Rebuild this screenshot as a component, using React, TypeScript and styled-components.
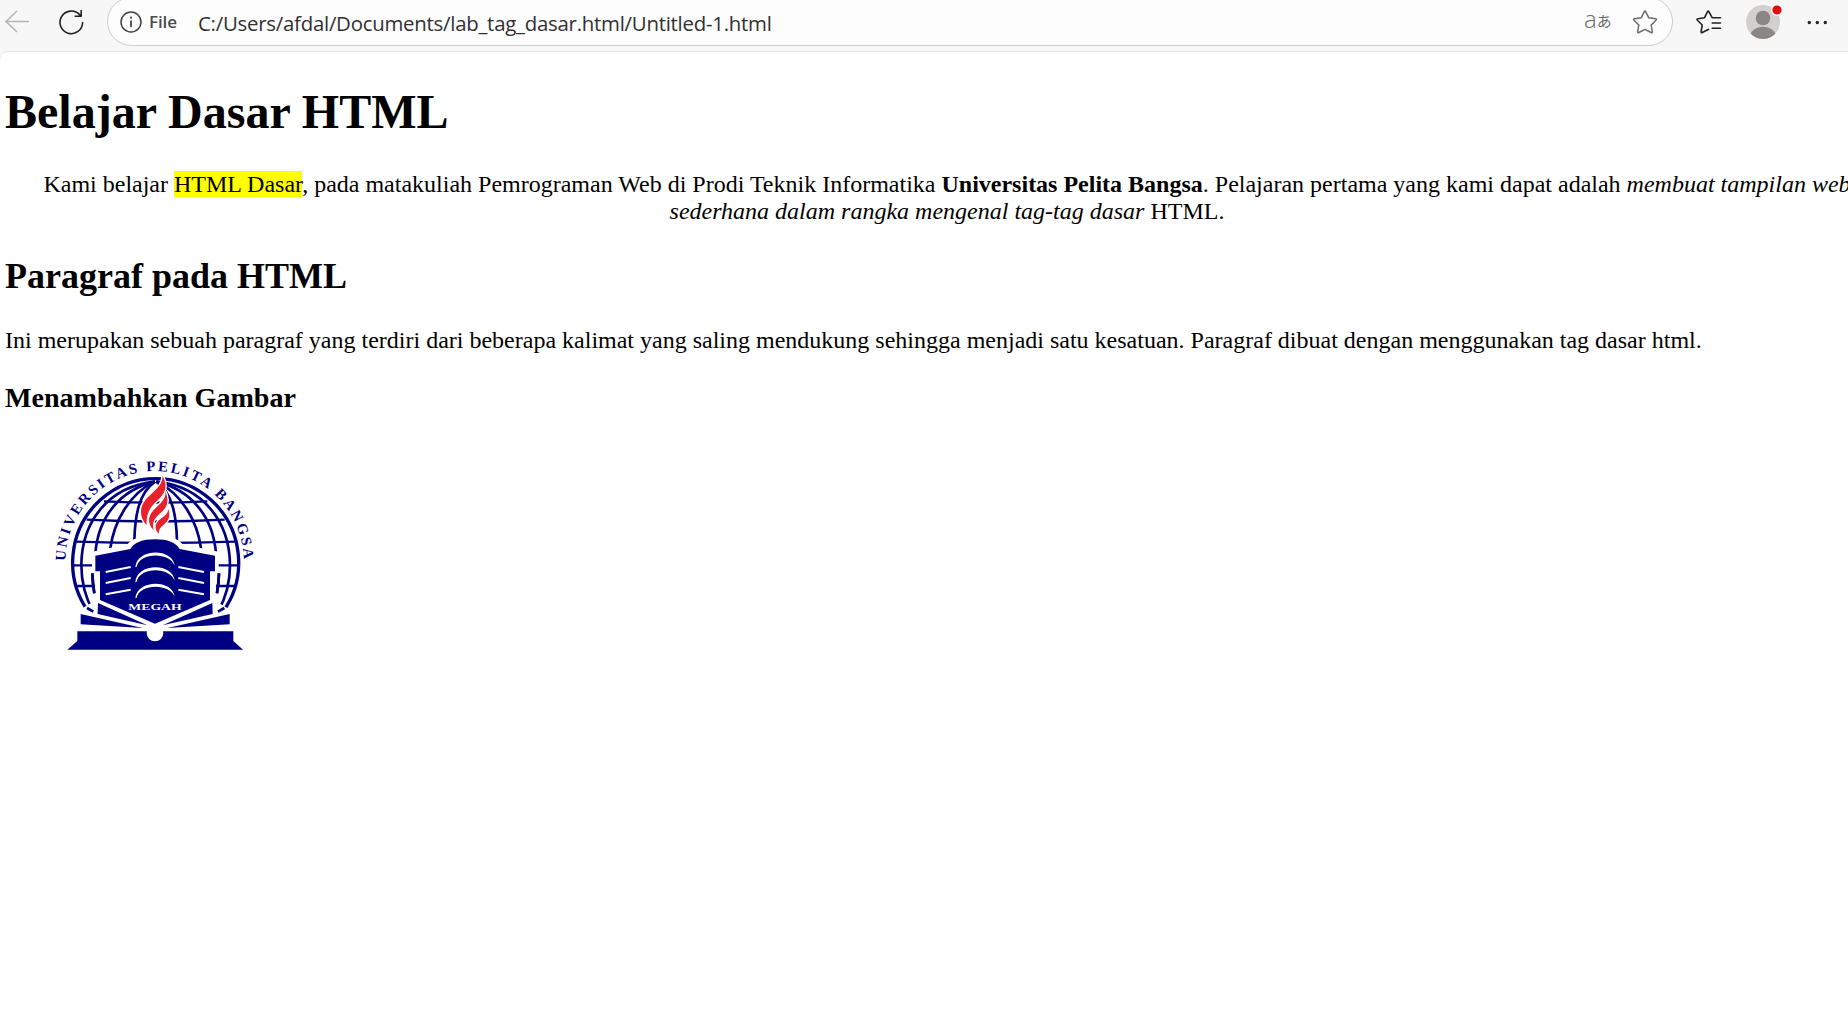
import React from 'react';
import styled, { createGlobalStyle } from 'styled-components';

const GlobalStyle = createGlobalStyle`
  html, body { margin: 0; background: #fff; overflow: hidden; }
`;

const Window = styled.div`
  display: flex;
  flex-direction: column;
  height: 1011px;
  overflow: hidden;
  background: #f7f7f7;
`;

const Toolbar = styled.header`
  display: flex;
  align-items: flex-start;
  height: 51px;
  flex: none;
  font-family: 'Open Sans', 'Noto Sans', sans-serif;
`;

const IconSlot = styled.span<{ $w: number; $gap?: number }>`
  display: flex;
  flex: none;
  align-items: center;
  height: 44px;
  width: ${(p) => p.$w}px;
  margin-left: ${(p) => p.$gap ?? 0}px;
  svg { display: block; overflow: visible; }
`;

const AddressBar = styled.div`
  box-sizing: border-box;
  display: flex;
  align-items: center;
  width: 1566px;
  height: 49px;
  margin: -3px 0 0 23px;
  border: 1.5px solid #cdcdcd;
  border-radius: 25px;
  background: #fdfdfd;
  padding-left: 12px;
  flex: none;
`;

const Scheme = styled.span`
  width: 49px;
  margin-left: 7px;
  font-size: 17px;
  font-weight: 600;
  line-height: 24px;
  color: #4a4a4a;
  letter-spacing: -0.1px;
`;

const Url = styled.span`
  flex: 1;
  padding-top: 2px;
  font-size: 20.4px;
  line-height: 28px;
  color: #303030;
  letter-spacing: -0.25px;
  white-space: nowrap;
`;

const Translate = styled.span`
  display: flex;
  align-items: center;
  width: 48px;
  color: #6b6b6b;
  font-size: 24px;
  line-height: 26px;
  font-weight: 300;
  span { margin-top: -6px; }
  small { margin-top: -1px; font: 400 15px/20px 'Noto Sans CJK JP', sans-serif; }
`;

const Page = styled.main`
  flex: 1;
  box-sizing: border-box;
  border-top: 1px solid #e4e4e4;
  border-top-left-radius: 8px;
  background: #fff;
  padding-left: 5px;
  color: #000;
  font: 24px/27px 'Liberation Serif', 'Times New Roman', serif;
`;

const Article = styled.article`
  width: 1884px;
`;

const Title = styled.h1`
  margin: 33px 0 32px;
  font-size: 48px;
  line-height: 54px;
`;

const Section = styled.h2`
  margin: 31px 0 30px;
  font-size: 36px;
  line-height: 41px;
`;

const Subsection = styled.h3`
  margin: 28px 0 36px;
  font-size: 28.08px;
  line-height: 32px;
`;

const Paragraph = styled.p<{ $center?: boolean }>`
  margin: 24px 0;
  text-align: ${(p) => (p.$center ? 'center' : 'left')};
`;

const Mark = styled.mark`
  background: #ff0;
  color: #000;
`;

const Figure = styled.figure`
  margin: 0 0 0 35px;
  svg { display: block; }
`;

const BackIcon = () => (
  <svg width="26" height="24" viewBox="0 0 26 24" fill="none" stroke="#b4b4b4" strokeWidth="1.5">
    <path d="M25 11.500H2M13 1L2 11.500l11 10.500" />
  </svg>
);

const ReloadIcon = () => (
  <svg width="26" height="26" viewBox="0 0 26 26" fill="none" stroke="#222" strokeWidth="1.6" strokeLinecap="round" strokeLinejoin="round">
    <path d="M24.600 13.500A11.300 11.300 0 1 1 21.800 5.900M23.200 1.500v5.700h-6" />
  </svg>
);

const InfoIcon = () => (
  <svg width="22" height="22" viewBox="0 0 22 22" fill="none" stroke="#444" strokeWidth="1.5">
    <circle cx="11" cy="11" r="10" />
    <path d="M11 9.5V16" strokeWidth="1.8" />
    <circle cx="11" cy="6.7" r="1.1" fill="#444" stroke="none" />
  </svg>
);

const StarIcon = () => (
  <svg width="26" height="24" viewBox="0 0 26 24" fill="none" stroke="#6b6b6b" strokeWidth="1.5" strokeLinejoin="round">
    <path d="M12.2 1.8q.8-1.4 1.6 0l3 6 6.700 1q1.500.3.500 1.500l-4.800 4.700 1.100 6.700q.1 1.400-1.200.8L13 19.400 6.900 22.500q-1.300.6-1.200-.8L6.800 15 2 10.300q-1-1.200.5-1.500l6.700-1z" />
  </svg>
);

const FavoritesIcon = () => (
  <svg width="26" height="24" viewBox="0 0 26 24" fill="none" stroke="#222" strokeWidth="1.6" strokeLinejoin="round" strokeLinecap="round">
    <path d="M16.200 7.700L13 1.800q-.8-1.400-1.600 0l-3 6-6.500 1q-1.500.3-.5 1.500L6.200 15 5.100 21.700q-.1 1.400 1.200.8L12.600 19.300M16.200 7.700H24.500M16.200 13H24.500M16.200 18.300H24.500" />
  </svg>
);

const AvatarIcon = () => (
  <svg width="36" height="36" viewBox="0 0 36 36">
    <defs>
      <clipPath id="avatar"><circle cx="17" cy="18" r="17" /></clipPath>
    </defs>
    <circle cx="17" cy="18" r="17" fill="#d2d0ce" />
    <g clipPath="url(#avatar)" fill="#8b8785">
      <circle cx="17" cy="14" r="7.300" />
      <ellipse cx="17" cy="33" rx="13" ry="10.300" />
    </g>
    <circle cx="31" cy="6" r="6" fill="#f7f7f7" />
    <circle cx="31" cy="6" r="4.600" fill="#e00b0b" />
  </svg>
);

const MoreIcon = () => (
  <svg width="22" height="6" viewBox="0 0 22 6" fill="#222">
    <circle cx="3.300" cy="3.500" r="1.700" /><circle cx="11.300" cy="3.500" r="1.700" /><circle cx="19.300" cy="3.500" r="1.700" />
  </svg>
);

const Meridians = () => (
  <>
    <path d="M345 95C200 110 125 220 124 345C124 400 140 450 160 485" />
    <path d="M345 95C240 120 175 200 166 310M157 370Q158 400 163 430" />
    <path d="M345 95C270 130 222 210 210 300" />
    <path d="M345 95C295 130 285 200 283 272" />
  </>
);

const UniversityLogo = () => (
  <svg width="230" height="210" viewBox="0 0 690 630" role="img" aria-label="Universitas Pelita Bangsa">
    <defs>
      <path id="ring" d="M76 338A268 275 0 0 1 612 338" />
    </defs>
    <g fill="none" stroke="#000082" strokeWidth="8">
      <path strokeWidth="10" d="M145 485A249 252 0 1 1 549 485" />
      <Meridians />
      <g transform="translate(694 0) scale(-1 1)"><Meridians /></g>
      <path strokeWidth="7" d="M192 154Q347 162 502 154M140 209Q347 220 554 209M108 275Q347 283 586 275M97 346H156M521 346H598M106 408H165M528 408H588" />
    </g>
    <path fill="#fff" d="M156 305L262 283Q280 257 345 257T428 283L536 305V368H522V450L585 488V545H105V488L168 450V368H156Z" />
    <g fill="none" stroke="#000082" strokeWidth="8">
      <path d="M141 474L160 485M157 370Q158 400 163 430M553 474L534 485M537 370Q536 400 531 430" />
    </g>
    <g fill="#000082">
      <path d="M166 317L271 297Q288 268 345 268T419 297L525 317V364H510V450L345 521L180 450V364H166Z" />
      <path d="M174 459L322 526L173 492ZM517 459L368 526L518 492Z" />
      <path d="M122 492L308 534L122 523ZM569 492L382 534L569 523Z" />
      <path d="M112 544H580V573L609 599H82L112 573Z" />
    </g>
    <circle cx="345" cy="549" r="25" fill="#fff" />
    <g fill="#fff">
      <path d="M286 352C290 293 400 293 404 348C390 306 300 306 290 350Z" />
      <path d="M286 397C290 337 400 337 404 393C390 350 300 350 290 395Z" />
      <path d="M286 445C290 387 400 387 404 441C390 400 300 400 290 443Z" />
    </g>
    <path fill="none" stroke="#fff" strokeWidth="6" d="M197 366L272 351M197 399L272 384M197 433L272 419M415 351L492 366M415 384L492 399M415 419L492 433" />
    <g fill="#e8212c" stroke="#fff" strokeWidth="8" paintOrder="stroke">
      <path d="M368 78C386 111 374 132 350 154C327 174 318 195 320 225C299 204 297 174 316 150C338 124 367 111 368 78Z" />
      <path d="M377 125C389 158 379 174 362 188C340 207 336 220 341 241C321 219 324 199 341 180C361 160 377 148 377 125Z" />
      <path d="M385 176C393 201 384 213 371 224C359 233 355 242 357 253C345 239 343 226 354 213C370 199 384 194 385 176Z" />
    </g>
    <g fontFamily="'Liberation Serif', serif" fontWeight="700">
      <text x="265" y="479" fontSize="27" fill="#fff" textLength="160" lengthAdjust="spacingAndGlyphs">MEGAH</text>
      <text fontSize="44" fill="#000082">
        <textPath href="#ring" startOffset="5" textLength="837" lengthAdjust="spacing">UNIVERSITAS PELITA BANGSA</textPath>
      </text>
    </g>
  </svg>
);

export default function App() {
  return (
    <>
      <GlobalStyle />
      <Window>
        <Toolbar>
          <IconSlot $w={26} $gap={4}><BackIcon /></IconSlot>
          <IconSlot $w={26} $gap={28}><ReloadIcon /></IconSlot>
          <AddressBar>
            <InfoIcon />
            <Scheme>File</Scheme>
            <Url>C:/Users/afdal/Documents/lab_tag_dasar.html/Untitled-1.html</Url>
            <Translate><span>a</span><small>あ</small></Translate>
            <IconSlot $w={40}><StarIcon /></IconSlot>
          </AddressBar>
          <IconSlot $w={26} $gap={23}><FavoritesIcon /></IconSlot>
          <IconSlot $w={36} $gap={24}><AvatarIcon /></IconSlot>
          <IconSlot $w={22} $gap={24}><MoreIcon /></IconSlot>
        </Toolbar>
        <Page>
          <Article>
            <Title>Belajar Dasar HTML</Title>
            <Paragraph $center>
              Kami belajar <Mark>HTML Dasar</Mark>, pada matakuliah Pemrograman Web di Prodi Teknik Informatika{' '}
              <b>Universitas Pelita Bangsa</b>. Pelajaran pertama yang kami dapat adalah{' '}
              <i>membuat tampilan web sederhana dalam rangka mengenal tag-tag dasar</i> HTML.
            </Paragraph>
            <Section>Paragraf pada HTML</Section>
            <Paragraph>
              Ini merupakan sebuah paragraf yang terdiri dari beberapa kalimat yang saling mendukung sehingga menjadi
              satu kesatuan. Paragraf dibuat dengan menggunakan tag dasar html.
            </Paragraph>
            <Subsection>Menambahkan Gambar</Subsection>
            <Figure><UniversityLogo /></Figure>
          </Article>
        </Page>
      </Window>
    </>
  );
}
